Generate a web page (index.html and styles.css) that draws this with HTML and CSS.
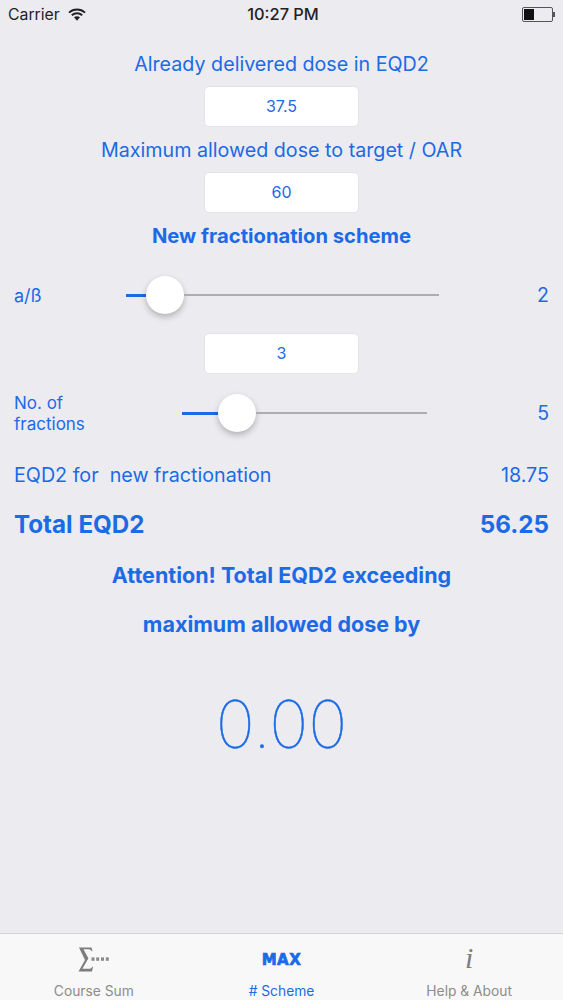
FILE: index.html
```html
<!DOCTYPE html>
<html lang="en">
<head>
<meta charset="UTF-8">
<meta name="viewport" content="width=device-width, initial-scale=1.0">
<title>EQD2 Scheme</title>
<link rel="stylesheet" href="styles.css">
</head>
<body>
<div class="status-bar">
  <div class="status-left">
    <span>Carrier</span>
    <svg class="wifi" width="18" height="13" viewBox="0 0 18 13">
      <path d="M1 4.6C5.4 0.4 12.6 0.4 17 4.6" fill="none" stroke="#222" stroke-width="2"/>
      <path d="M3.8 7.2C6.8 4.5 11.2 4.5 14.2 7.2" fill="none" stroke="#222" stroke-width="2"/>
      <path d="M6 9.2C7.6 7.9 10.4 7.9 12 9.2L9 12.8Z" fill="#222"/>
    </svg>
  </div>
  <div class="status-time">10:27 PM</div>
  <div class="status-right">
    <div class="battery"><div class="battery-fill"></div></div>
    <div class="battery-tip"></div>
  </div>
</div>

<main>
  <div class="label first">Already delivered dose in EQD2</div>
  <div class="field">37.5</div>
  <div class="label">Maximum allowed dose to target / OAR</div>
  <div class="field">60</div>
  <div class="label bold scheme-title">New fractionation scheme</div>

  <div class="slider-row ab-row">
    <span class="row-label">a/ß</span>
    <div class="slider ab-slider">
      <div class="track-on ab-on"></div>
      <div class="thumb"></div>
      <div class="track-off"></div>
    </div>
    <span class="row-value">2</span>
  </div>

  <div class="field third">3</div>

  <div class="slider-row frac-row">
    <span class="row-label frac-label">No. of<br>fractions</span>
    <div class="slider frac-slider">
      <div class="track-on frac-on"></div>
      <div class="thumb"></div>
      <div class="track-off"></div>
    </div>
    <span class="row-value">5</span>
  </div>

  <div class="result-row">
    <span>EQD2 for&nbsp; new fractionation</span>
    <span>18.75</span>
  </div>
  <div class="result-row total-row">
    <span>Total EQD2</span>
    <span>56.25</span>
  </div>

  <div class="label bold attention">Attention! Total EQD2 exceeding</div>
  <div class="label bold attention second">maximum allowed dose by</div>
  <div class="big-number">0.00</div>
</main>

<nav class="tab-bar">
  <div class="tab">
    <svg class="tab-icon" width="32" height="25" viewBox="0 0 32 25">
      <path d="M1 0.5H13.5L14.5 4.2H13.6C12.8 2.6 11.8 2.2 10 2.2H5.4L10.4 11.2L4.4 21.8H11C12.6 21.8 13.6 21.2 14.2 19.8H15L14 24.5H0.5L7 13Z" fill="#7d7d7d"/>
      <g fill="#8a8a8a">
        <rect x="13.5" y="10.4" width="3" height="3.4"/>
        <rect x="18.2" y="10.4" width="3" height="3.4"/>
        <rect x="23" y="10.4" width="3" height="3.4"/>
        <rect x="27.8" y="10.4" width="3" height="3.4"/>
      </g>
    </svg>
    <span>Course Sum</span>
  </div>
  <div class="tab active">
    <span class="max-icon">MAX</span>
    <span>&#35; Scheme</span>
  </div>
  <div class="tab">
    <span class="info-icon">i</span>
    <span>Help &amp; About</span>
  </div>
</nav>
</body>
</html>
```

FILE: styles.css
```css
html, body {
  margin: 0;
  padding: 0;
}
body {
  width: 563px;
  height: 1000px;
  overflow: hidden;
  display: flex;
  flex-direction: column;
  background-color: #ecebf0;
  color: #1b6ae6;
  font-family: Inter, "Liberation Sans", sans-serif;
}
.status-bar {
  height: 30px;
  box-sizing: border-box;
  padding: 0 8px 2px 8px;
  display: flex;
  align-items: center;
  color: #222;
  font-size: 15.8px;
}
.status-left {
  flex: 1;
  display: flex;
  align-items: center;
  gap: 8px;
}
.status-time {
  font-weight: 500;
  font-size: 16.4px;
  margin-left: 3px;
}
.status-right {
  flex: 1;
  display: flex;
  align-items: center;
  justify-content: flex-end;
}
.battery {
  width: 27px;
  height: 11px;
  border: 1px solid #555;
  border-radius: 2px;
  padding: 1px;
}
.battery-fill {
  width: 10px;
  height: 11px;
  background-color: #111;
}
.battery-tip {
  width: 2px;
  height: 5px;
  background-color: #555;
}
main {
  flex: 1;
  display: flex;
  flex-direction: column;
  align-items: center;
}
.label {
  font-size: 19.7px;
  line-height: 24px;
  text-align: center;
}
.first {
  margin-top: 22px;
}
.bold {
  font-weight: 700;
}
.field {
  width: 153px;
  height: 37px;
  margin: 10px 0 11px;
  padding-bottom: 2px;
  background-color: #fff;
  border: 1px solid #e4e3e8;
  border-radius: 5px;
  display: flex;
  align-items: center;
  justify-content: center;
  font-size: 16px;
}
.scheme-title {
  font-size: 20.2px;
}
.slider-row {
  width: 100%;
  box-sizing: border-box;
  padding: 0 14px;
  display: flex;
  align-items: center;
  font-size: 18px;
}
.ab-row {
  margin-top: 25px;
  height: 44px;
}
.frac-row {
  margin-top: 17px;
  height: 44px;
}
.row-label {
  width: 112px;
  flex-shrink: 0;
}
.frac-label {
  width: 168px;
  font-size: 17px;
  line-height: 21px;
  padding-top: 2px;
}
.row-value {
  margin-left: auto;
  font-size: 19.5px;
}
.slider {
  display: flex;
  align-items: center;
}
.ab-slider {
  width: 313px;
}
.frac-slider {
  width: 245px;
}
.track-on {
  height: 3px;
  background-color: #1b6ae6;
}
.ab-on {
  width: 20px;
}
.frac-on {
  width: 36px;
}
.track-off {
  flex: 1;
  height: 2.5px;
  background-color: #adacb0;
}
.thumb {
  width: 38px;
  height: 38px;
  border-radius: 50%;
  background-color: #fff;
  box-shadow: 0 3px 6px rgba(0, 0, 0, 0.25);
  flex-shrink: 0;
}
.third {
  margin: 16px 0 0;
}
.result-row {
  width: 100%;
  box-sizing: border-box;
  padding: 0 14px;
  display: flex;
  justify-content: space-between;
  font-size: 19.7px;
  line-height: 24px;
  margin-top: 28px;
}
.total-row {
  font-size: 24.2px;
  font-weight: 700;
  line-height: 28px;
  margin-top: 24px;
}
.attention {
  font-size: 21.5px;
  margin-top: 24px;
}
.second {
  margin-top: 25px;
}
.big-number {
  font-size: 66px;
  font-weight: 100;
  -webkit-text-stroke: 0.5px #1b6ae6;
  line-height: 80px;
  margin-top: 48px;
}
.tab-bar {
  height: 67px;
  flex-shrink: 0;
  box-sizing: border-box;
  border-top: 1px solid #d2d2d4;
  background-color: #f8f8f8;
  display: grid;
  grid-template-columns: repeat(3, 1fr);
  color: #8c8c8c;
  font-size: 13.8px;
}
.tab {
  display: flex;
  flex-direction: column;
  align-items: center;
  justify-content: flex-end;
  padding-bottom: 1px;
  line-height: 16px;
}
.tab.active {
  color: #1b6ae6;
}
.tab-icon {
  margin-bottom: 11px;
}
.max-icon {
  font-family: "DejaVu Sans", sans-serif;
  font-weight: 700;
  font-size: 15px;
  line-height: 26px;
  letter-spacing: 0.5px;
  -webkit-text-stroke: 0.7px #1b6ae6;
  margin-bottom: 10px;
}
.info-icon {
  font-family: "Liberation Serif", serif;
  font-style: italic;
  font-size: 30px;
  line-height: 26px;
  color: #7d7d7d;
  margin-bottom: 12px;
}
```
